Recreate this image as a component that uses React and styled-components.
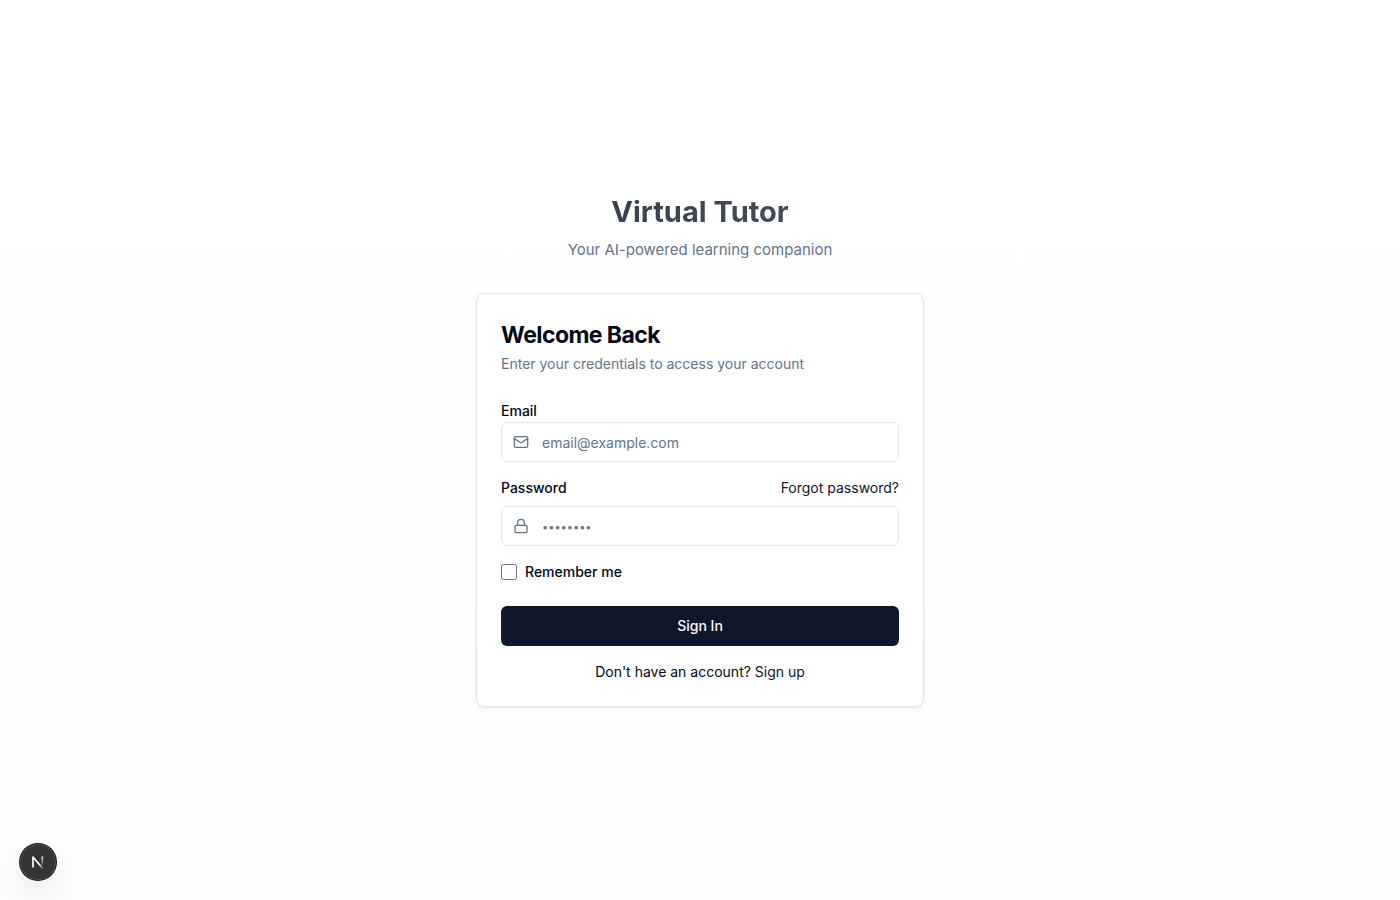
import React from "react";
import styled, { createGlobalStyle } from "styled-components";
import { Mail, Lock } from "lucide-react";

const GlobalStyle = createGlobalStyle`
  *, *::before, *::after { box-sizing: border-box; }
  body {
    margin: 0;
    font-family: Inter, "Liberation Sans", sans-serif;
    font-size: 16px;
    line-height: 24px;
    color: #020817;
    -webkit-font-smoothing: antialiased;
  }
  h1, h2, p { margin: 0; }
  button, input { font: inherit; }
`;

const Page = styled.main`
  min-height: 100vh;
  display: flex;
  flex-direction: column;
  align-items: center;
  justify-content: center;
  padding: 16px;
  background: linear-gradient(to bottom, #ffffff, #fcfdfd);
`;

const Column = styled.div`
  width: 100%;
  max-width: 448px;
  display: flex;
  flex-direction: column;
  gap: 30px;
`;

const Brand = styled.header`
  display: flex;
  flex-direction: column;
  gap: 6px;
  text-align: center;
`;

const BrandName = styled.h1`
  font-size: 29px;
  line-height: 38px;
  font-weight: 700;
  color: transparent;
  background: linear-gradient(to right, #303748, #4d5361);
  background-clip: text;
  -webkit-background-clip: text;
`;

const Tagline = styled.p`
  font-size: 15px;
  line-height: 26px;
  color: #64748b;
`;

const Card = styled.section`
  padding: 24px;
  border: 1px solid #e2e8f0;
  border-radius: 8px;
  background: #ffffff;
  box-shadow: 0 1px 2px rgba(0, 0, 0, 0.05), 0 1px 3px rgba(0, 0, 0, 0.06);
`;

const CardHeader = styled.div`
  display: flex;
  flex-direction: column;
  gap: 2px;
  margin-bottom: 24px;
`;

const CardTitle = styled.h2`
  font-size: 23px;
  line-height: 34px;
  font-weight: 700;
  letter-spacing: -0.025em;
`;

const CardDescription = styled.p`
  font-size: 14px;
  line-height: 20px;
  color: #64748b;
`;

const Form = styled.form`
  display: flex;
  flex-direction: column;
  gap: 16px;
`;

const Field = styled.div``;

const LabelRow = styled.div`
  display: flex;
  align-items: center;
  justify-content: space-between;
  margin-bottom: 8px;
`;

const Label = styled.label`
  font-size: 14px;
  line-height: 20px;
  font-weight: 500;
`;

const TextLink = styled.a`
  font-size: 14px;
  line-height: 20px;
  color: #0f172a;
  text-decoration: none;
  &:hover { text-decoration: underline; }
`;

const InputShell = styled.div`
  display: flex;
  align-items: center;
  gap: 13px;
  height: 40px;
  padding: 0 12px 0 11px;
  border: 1px solid #e2e8f0;
  border-radius: 6px;
  background: #ffffff;
  color: #64748b;
  &:focus-within { border-color: #64748b; }
  svg { flex: none; }
`;

const Input = styled.input`
  flex: 1;
  min-width: 0;
  padding: 1px 0 0;
  border: 0;
  outline: 0;
  background: transparent;
  color: #020817;
  font-size: 14px;
  line-height: 20px;
  &::placeholder {
    color: #64748b;
    opacity: 1;
  }
  &[type="password"] { padding: 0; }
  &[type="password"]::placeholder { font-size: 11px; }
`;

const RememberRow = styled.div`
  display: flex;
  align-items: center;
  gap: 8px;
  margin-bottom: 8px;
`;

const Checkbox = styled.input`
  width: 16px;
  height: 16px;
  margin: 0;
`;

const SubmitButton = styled.button`
  height: 40px;
  border: 0;
  border-radius: 6px;
  background: #0f172a;
  color: #f8fafc;
  font-size: 14px;
  line-height: 20px;
  font-weight: 500;
  cursor: pointer;
`;

const SignUpPrompt = styled.p`
  font-size: 14px;
  line-height: 20px;
  text-align: center;
`;

const DevBadge = styled.button`
  position: fixed;
  left: 20px;
  bottom: 20px;
  display: flex;
  align-items: center;
  justify-content: center;
  width: 36px;
  height: 36px;
  padding: 0;
  border: 0;
  border-radius: 50%;
  background: #333534;
  box-shadow: 0 0 0 1px #171717, inset 0 0 0 1px rgba(255, 255, 255, 0.14),
    0 16px 32px -8px rgba(0, 0, 0, 0.24);
`;

function NextLogo() {
  return (
    <svg width="14" height="14" viewBox="0 0 14 14" fill="none" aria-hidden="true">
      <defs>
        <linearGradient id="diagonal" x1="9" y1="9" x2="13" y2="14" gradientUnits="userSpaceOnUse">
          <stop stopColor="#fff" />
          <stop offset="1" stopColor="#fff" stopOpacity="0" />
        </linearGradient>
        <linearGradient id="stem" x1="11" y1="1" x2="11" y2="11" gradientUnits="userSpaceOnUse">
          <stop stopColor="#fff" />
          <stop offset="1" stopColor="#fff" stopOpacity="0" />
        </linearGradient>
      </defs>
      <path d="M2 2L11.8 13.5" stroke="url(#diagonal)" strokeWidth="1.7" />
      <path d="M2 12.5V1.5" stroke="#fff" strokeWidth="1.7" />
      <path d="M11.3 1.5V10" stroke="url(#stem)" strokeWidth="1.6" />
    </svg>
  );
}

export default function App() {
  return (
    <>
      <GlobalStyle />
      <Page>
        <Column>
          <Brand>
            <BrandName>Virtual Tutor</BrandName>
            <Tagline>Your AI-powered learning companion</Tagline>
          </Brand>
          <Card>
            <CardHeader>
              <CardTitle>Welcome Back</CardTitle>
              <CardDescription>Enter your credentials to access your account</CardDescription>
            </CardHeader>
            <Form onSubmit={(e) => e.preventDefault()}>
              <Field>
                <Label htmlFor="email">Email</Label>
                <InputShell>
                  <Mail size={16} aria-hidden="true" />
                  <Input id="email" type="email" placeholder="email@example.com" />
                </InputShell>
              </Field>
              <Field>
                <LabelRow>
                  <Label htmlFor="password">Password</Label>
                  <TextLink href="#forgot-password">Forgot password?</TextLink>
                </LabelRow>
                <InputShell>
                  <Lock size={16} aria-hidden="true" />
                  <Input id="password" type="password" placeholder="••••••••" />
                </InputShell>
              </Field>
              <RememberRow>
                <Checkbox id="remember" type="checkbox" />
                <Label htmlFor="remember">Remember me</Label>
              </RememberRow>
              <SubmitButton type="submit">Sign In</SubmitButton>
              <SignUpPrompt>
                Don't have an account? <TextLink href="#sign-up">Sign up</TextLink>
              </SignUpPrompt>
            </Form>
          </Card>
        </Column>
      </Page>
      <DevBadge type="button" aria-label="Open developer tools">
        <NextLogo />
      </DevBadge>
    </>
  );
}
